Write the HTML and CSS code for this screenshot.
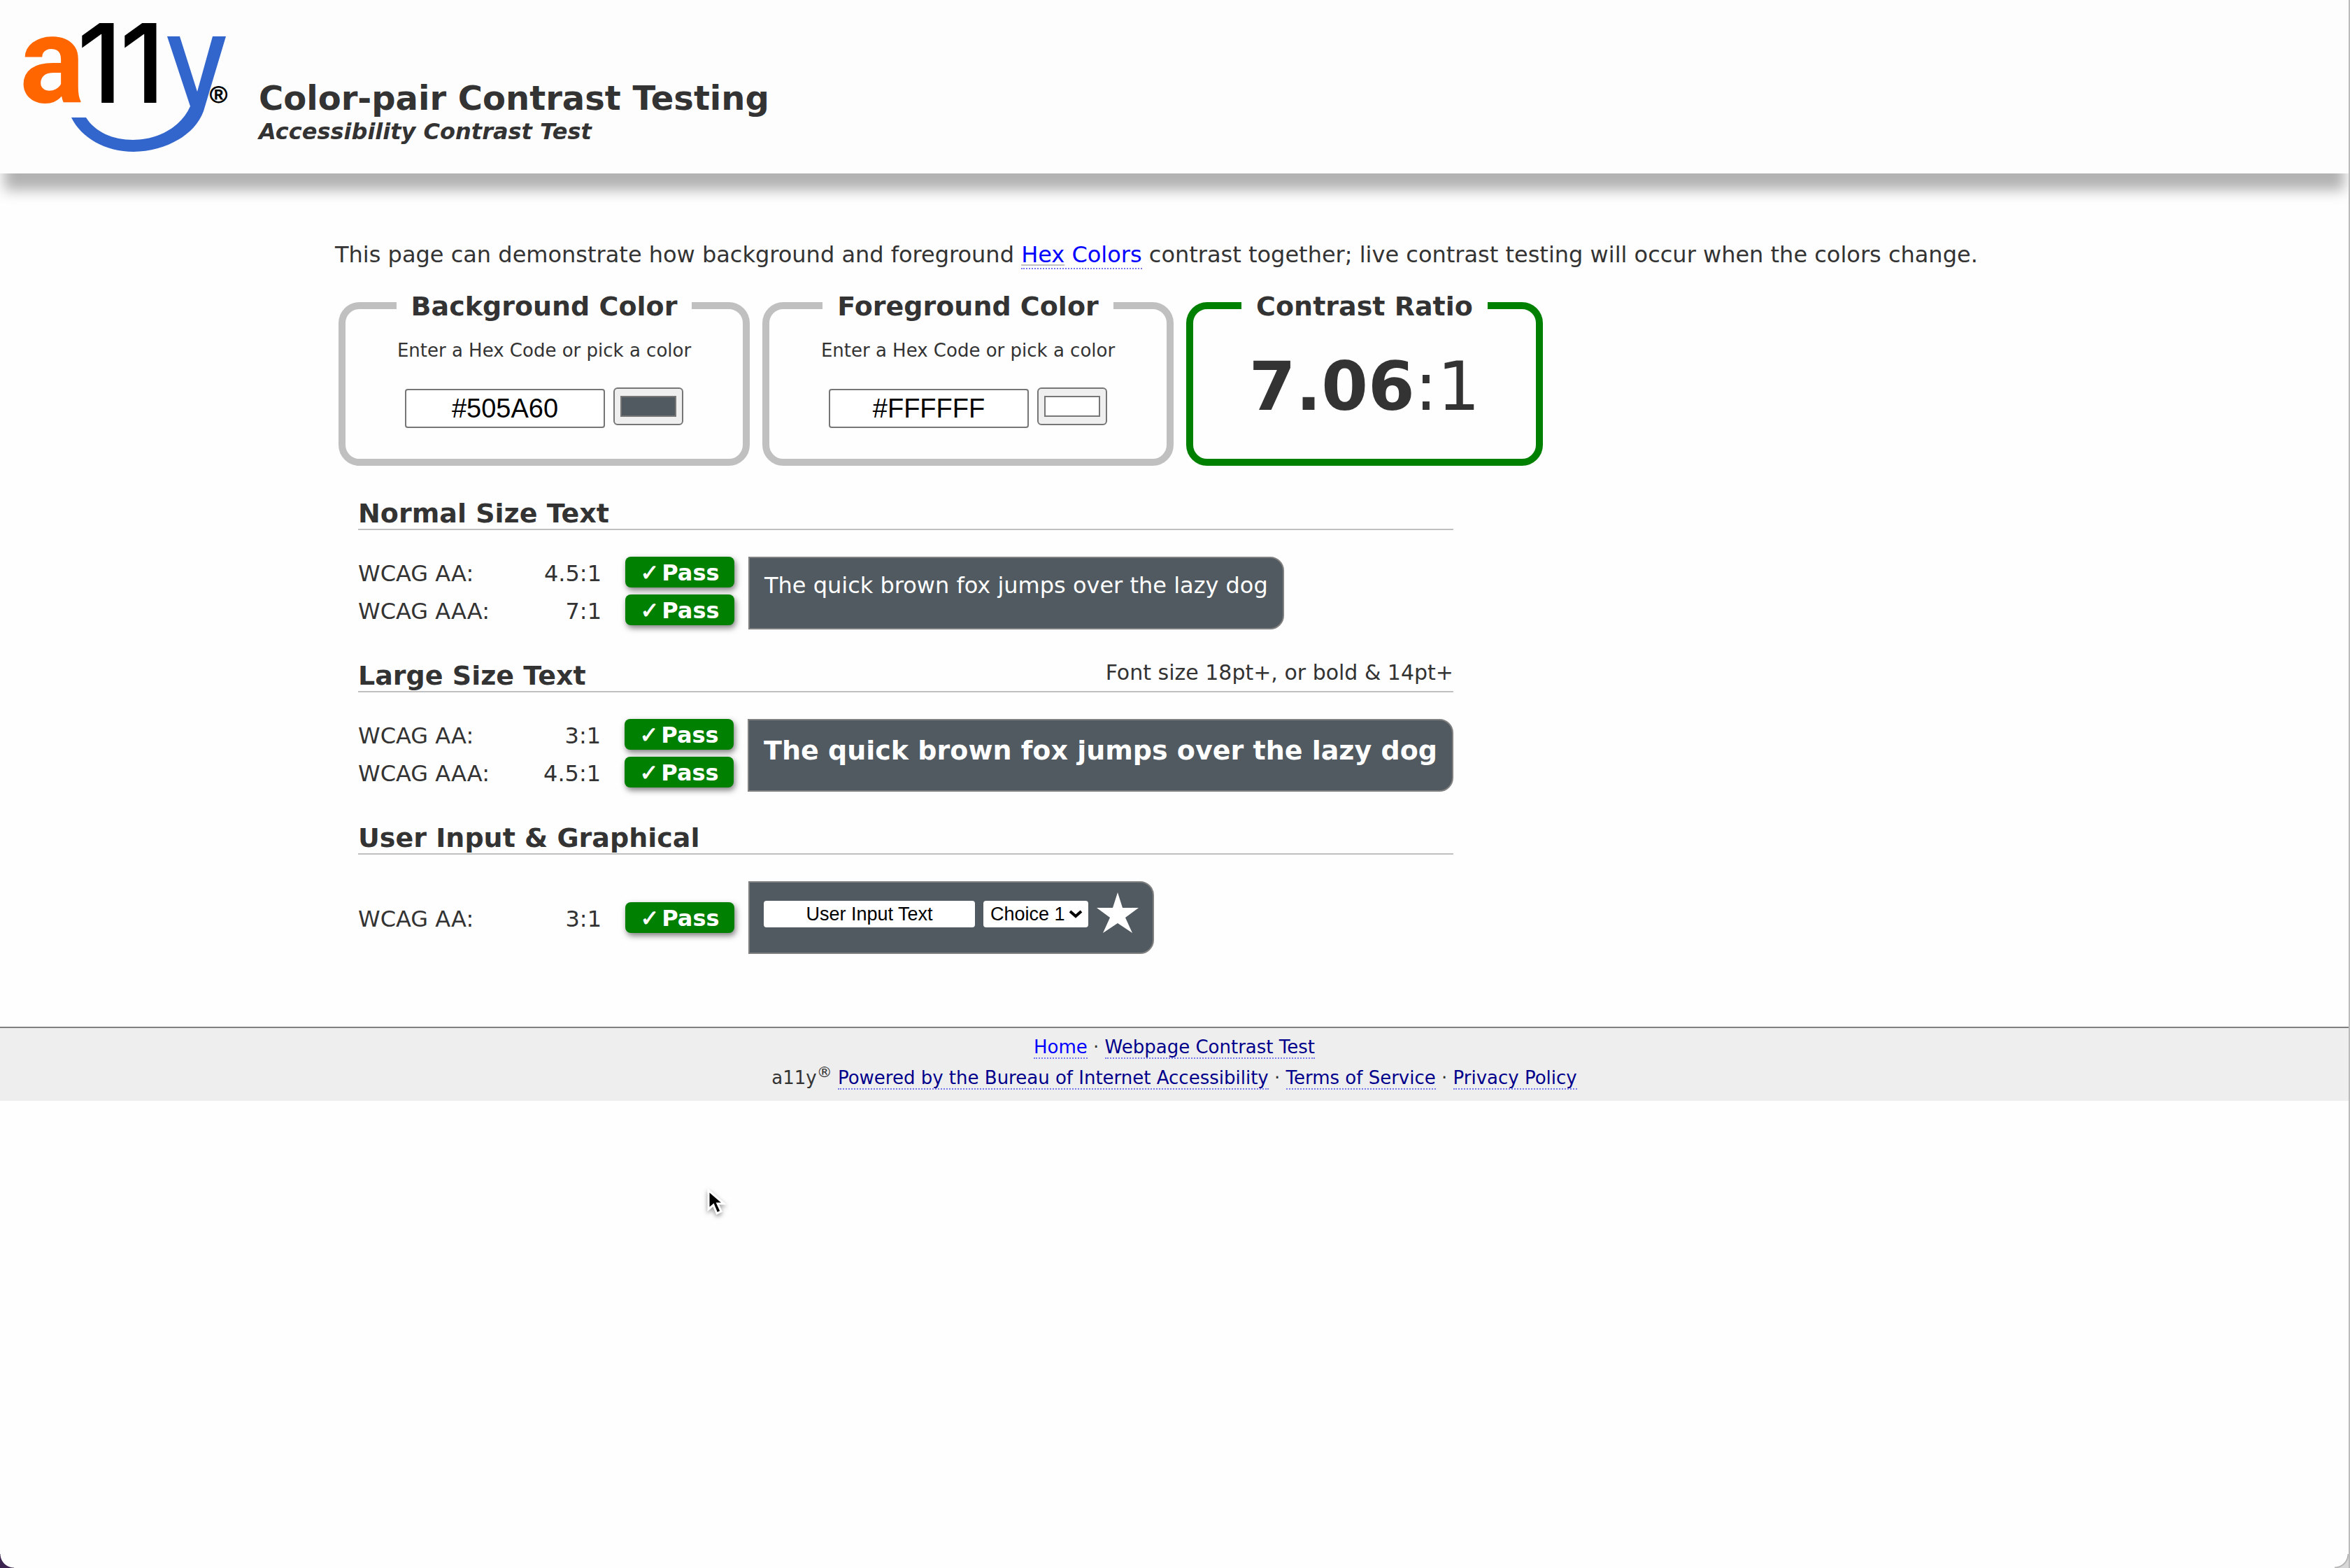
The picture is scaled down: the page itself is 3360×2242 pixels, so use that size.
FILE: index.html
```html
<!DOCTYPE html>
<html lang="en">
<head>
<meta charset="utf-8">
<title>Color-pair Contrast Testing</title>
<link rel="stylesheet" href="styles.css">
</head>
<body>
<header class="masthead">
  <svg class="logo" viewBox="0 0 304 192" role="img" aria-label="a11y">
    <text class="logo-a" x="0" y="121">a</text>
    <text class="logo-one" x="82" y="122">1</text>
    <text class="logo-one" x="143" y="122">1</text>
    <path class="logo-smile" d="M211 27H229L254 106L276 27H295L263 134C250 170 205 192 163 192C123 192 88 172 74 143H95C108 164 134 175 162 175C197 175 230 158 244 127Z"/>
    <text class="logo-reg" x="272" y="122">®</text>
  </svg>
  <div>
    <h1 class="title">Color-pair Contrast Testing</h1>
    <p class="subtitle">Accessibility Contrast Test</p>
  </div>
</header>

<main class="content">
  <p class="intro">This page can demonstrate how background and foreground <a class="link" href="#"><abbr class="abbr">Hex</abbr> Colors</a> contrast together; live contrast testing will occur when the colors change.</p>

  <form class="cards">
    <fieldset class="card">
      <legend class="legend">Background Color</legend>
      <label class="hint" for="bg-hex">Enter a Hex Code or pick a color</label>
      <div class="fields">
        <input class="hex" id="bg-hex" type="text" value="#505A60">
        <input class="picker" type="color" value="#505a60" aria-label="Background color picker">
      </div>
    </fieldset>
    <fieldset class="card">
      <legend class="legend">Foreground Color</legend>
      <label class="hint" for="fg-hex">Enter a Hex Code or pick a color</label>
      <div class="fields">
        <input class="hex" id="fg-hex" type="text" value="#FFFFFF">
        <input class="picker" type="color" value="#ffffff" aria-label="Foreground color picker">
      </div>
    </fieldset>
    <fieldset class="card card-ratio">
      <legend class="legend">Contrast Ratio</legend>
      <output class="ratio"><b>7.06</b>:1</output>
    </fieldset>
  </form>

  <section class="test">
    <div class="test-head"><h2>Normal Size Text</h2></div>
    <div class="test-body">
      <ul class="criteria">
        <li><span>WCAG AA:</span><span>4.5:1</span><strong class="badge"><i>✓</i>Pass</strong></li>
        <li><span>WCAG AAA:</span><span>7:1</span><strong class="badge"><i>✓</i>Pass</strong></li>
      </ul>
      <div class="sample">The quick brown fox jumps over the lazy dog</div>
    </div>
  </section>

  <section class="test">
    <div class="test-head"><h2>Large Size Text</h2><span class="note">Font size 18pt+, or bold &amp; 14pt+</span></div>
    <div class="test-body">
      <ul class="criteria">
        <li><span>WCAG AA:</span><span>3:1</span><strong class="badge"><i>✓</i>Pass</strong></li>
        <li><span>WCAG AAA:</span><span>4.5:1</span><strong class="badge"><i>✓</i>Pass</strong></li>
      </ul>
      <div class="sample sample-large">The quick brown fox jumps over the lazy dog</div>
    </div>
  </section>

  <section class="test">
    <div class="test-head"><h2>User Input &amp; Graphical</h2></div>
    <div class="test-body test-body-single">
      <ul class="criteria">
        <li><span>WCAG AA:</span><span>3:1</span><strong class="badge"><i>✓</i>Pass</strong></li>
      </ul>
      <div class="sample sample-controls">
        <input class="demo-input" type="text" value="User Input Text" aria-label="Sample input">
        <span class="demo-choice">
          <select class="demo-select" aria-label="Sample choice"><option>Choice 1</option><option>Choice 2</option></select>
          <svg class="chevron" viewBox="0 0 20 12" aria-hidden="true"><path d="M2 2L10 9L18 2"/></svg>
        </span>
        <svg class="star" viewBox="0 0 60 60" aria-hidden="true"><path d="M30 1L37 23H60L41 37L51 59L30 45L9 59L19 37L0 23H23Z"/></svg>
      </div>
    </div>
  </section>
</main>

<footer class="footer">
  <p><a class="link" href="#">Home</a> · <a class="link visited" href="#">Webpage Contrast Test</a></p>
  <p>a11y<sup>®</sup> <a class="link visited" href="#">Powered by the Bureau of Internet Accessibility</a> · <a class="link visited" href="#">Terms of Service</a> · <a class="link visited" href="#">Privacy Policy</a></p>
</footer>

<svg class="pointer" viewBox="0 0 26 40" aria-hidden="true"><path d="M2 3V30L9 24L14 36L20 33L15 22H24Z"/></svg>
<div class="corner corner-left"></div>
<div class="corner corner-right"></div>
</body>
</html>
```

FILE: styles.css
```css
* { box-sizing: border-box; }

body {
  margin: 0;
  min-height: 100vh;
  border-right: 2px solid #bbb;
  background: #fefefe;
  color: #333;
  font: 32px/44px Verdana, "DejaVu Sans", sans-serif;
}

h1, h2, p, ul { margin: 0; padding: 0; }

.masthead {
  display: flex;
  gap: 38px;
  height: 248px;
  padding: 25px 28px 0;
  background: #fdfdfd;
  box-shadow: 0 30px 18px -6px rgba(0, 0, 0, .3);
}

.logo { width: 304px; height: 192px; overflow: visible; }
.logo-a { fill: #f60; font: bold 174px "Liberation Sans Narrow", "Arial Narrow", Roboto, sans-serif; }
.logo-one { fill: #000; font: 500 157px Inter, sans-serif; }
.logo-smile { fill: #36c; }
.logo-reg { fill: #000; stroke: #000; stroke-width: 1px; font: 34px "Liberation Sans", Arial, sans-serif; }

.title { padding-top: 85px; font-size: 48px; line-height: 60px; }
.subtitle { font-weight: bold; font-style: italic; line-height: 36px; }

.content { max-width: 2400px; margin: 0 auto; padding: 94px 0 104px; }

.link { color: #00f; text-decoration: none; border-bottom: 2px dotted #77e; }
.visited { color: #00008b; }
.abbr { text-decoration: underline #c0c0c0 2px; text-underline-offset: 3px; }

.cards {
  display: flex;
  gap: 18px;
  margin: 28px 5px 46px;
}
.card {
  width: 588px;
  height: 252px;
  margin: 0;
  padding: 25px 0 0;
  border: 10px solid #c0c0c0;
  border-radius: 30px;
  text-align: center;
}
.card-ratio { width: 510px; padding-top: 35px; border-color: green; }
.legend {
  margin: 0 auto;
  padding: 2px 21px 0;
  font-size: 38px;
  font-weight: bold;
}
.hint { display: block; font-size: 26px; line-height: 32px; }
.fields { display: flex; justify-content: center; gap: 12px; padding-top: 37px; }
.hex {
  width: 286px;
  height: 56px;
  margin-top: 2px;
  border: 2px solid #767676;
  border-radius: 4px;
  background: #fff;
  color: #000;
  font: 38px "Liberation Sans", Arial, sans-serif;
  text-align: center;
}
.picker {
  width: 100px;
  height: 54px;
  padding: 10px 8px;
  border: 2px solid #767676;
  border-radius: 6px;
  background: #efefef;
}
.picker::-webkit-color-swatch-wrapper { padding: 0; }
.picker::-webkit-color-swatch { border: 2px solid #767676; border-radius: 0; }
.ratio { display: block; font-size: 96px; line-height: 116px; }

.test { max-width: 1566px; margin: 0 0 44px 33px; }
.test:last-child { margin-bottom: 0; }
.test-head {
  display: flex;
  justify-content: space-between;
  border-bottom: 2px solid #c0c0c0;
}
.test-head h2 { font-size: 38px; line-height: 44px; }
.note { font-size: 30px; line-height: 36px; }
.test-body { display: flex; gap: 20px; padding-top: 38px; }
.test-body-single { align-items: center; }

.criteria { display: grid; gap: 10px; align-content: start; width: 538px; list-style: none; }
.criteria li {
  display: grid;
  grid-template-columns: 1fr auto 156px;
  column-gap: 34px;
  height: 44px;
}
.criteria span { padding-top: 4px; line-height: 40px; }
.badge {
  display: flex;
  justify-content: center;
  gap: 4px;
  padding-top: 4px;
  border-radius: 8px;
  background: green;
  box-shadow: 2px 4px 8px rgba(0, 0, 0, .5);
  color: #fff;
  line-height: 38px;
}
.badge i { font-style: normal; -webkit-text-stroke: 1px #fff; }

.sample {
  height: 104px;
  padding: 17px 21px;
  border: 2px solid gray;
  border-radius: 0 20px 20px 0;
  background: #505a60;
  color: #fff;
  white-space: nowrap;
}
.sample-large { font-size: 38px; font-weight: bold; line-height: 52px; }
.sample-controls { display: flex; align-items: flex-start; gap: 12px; padding: 13px 20px; }
.demo-input, .demo-select {
  height: 38px;
  border: 0;
  border-radius: 4px;
  background: #fff;
  color: #000;
  font: 27px "Liberation Sans", Arial, sans-serif;
}
.demo-input { width: 302px; margin-top: 13px; padding: 0; text-align: center; }
.demo-choice { position: relative; display: flex; margin-top: 13px; }
.demo-select { width: 150px; padding: 0 10px; appearance: none; }
.chevron { position: absolute; right: 8px; top: 13px; width: 20px; height: 12px; fill: none; stroke: #000; stroke-width: 4; }
.star { width: 60px; height: 60px; fill: #fff; }

.footer {
  padding: 5px 0 11px;
  border-top: 2px solid gray;
  background: #eee;
  font-size: 26px;
  text-align: center;
}
.footer sup { font-size: 22px; line-height: 0; }

.pointer {
  position: absolute;
  left: 1011px;
  top: 1699px;
  width: 26px;
  height: 40px;
  overflow: visible;
  fill: #000;
  stroke: #fff;
  stroke-width: 3;
  filter: drop-shadow(0 3px 3px rgba(0, 0, 0, .4));
}
.corner { position: fixed; bottom: 0; width: 20px; height: 20px; }
.corner-left { left: 0; background: radial-gradient(circle at 100% 0, transparent 19px, #3c2450 20px); }
.corner-right { right: 2px; background: radial-gradient(circle at 0 0, transparent 18px, #aaa 19px, #d8d8d8 21px); }
```
